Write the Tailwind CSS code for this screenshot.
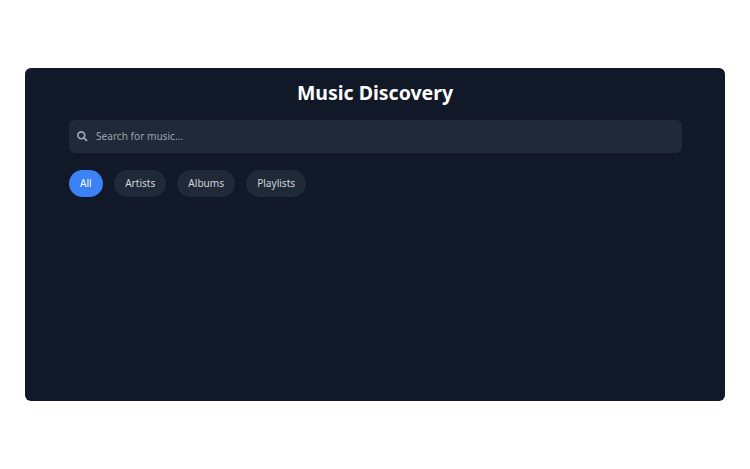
<!DOCTYPE html>
<html>
<head>
<meta charset="utf-8">
<script src="https://cdn.jsdelivr.net/npm/@tailwindcss/browser@4"></script>
</head>
<body class="bg-white font-['Noto_Sans',sans-serif]">
<div class="w-[750px] h-[469px] flex items-center justify-center">
  <main class="w-[700px] h-[333px] rounded-[6px] bg-[#111827] px-[43.5px] pt-[10px] flex flex-col">
    <h1 class="text-center text-[19.5px] leading-[30px] font-bold text-white">Music Discovery</h1>
    <div class="mt-[12px] h-[33px] rounded-md bg-[#1f2937] flex items-center pl-[8.5px] gap-[8.5px]">
      <svg class="w-[10.5px] h-[10.5px] text-[#9ca3af]" viewBox="0 0 512 512" fill="currentColor"><path d="M505 442.7L405.3 343c-4.5-4.5-10.6-7-17-7H372c27.6-35.3 44-79.7 44-128C416 93.1 322.9 0 208 0S0 93.1 0 208s93.1 208 208 208c48.3 0 92.7-16.4 128-44v16.3c0 6.4 2.5 12.5 7 17l99.7 99.7c9.4 9.4 24.6 9.4 33.9 0l28.3-28.3c9.4-9.4 9.4-24.6.1-34zM208 336c-70.7 0-128-57.2-128-128 0-70.7 57.2-128 128-128 70.7 0 128 57.2 128 128 0 70.7-57.2 128-128 128z"/></svg>
      <span class="text-[10.1px] text-[#9ca3af]">Search for music...</span>
    </div>
    <div class="mt-[17px] flex gap-[11px] text-[10.1px] leading-[27px]">
      <span class="h-[27px] px-[11.5px] rounded-full bg-[#3b82f6] text-white">All</span>
      <span class="h-[27px] px-[11px] rounded-full bg-[#1f2937] text-[#d1d5db]">Artists</span>
      <span class="h-[27px] px-[11px] rounded-full bg-[#1f2937] text-[#d1d5db]">Albums</span>
      <span class="h-[27px] px-[11px] rounded-full bg-[#1f2937] text-[#d1d5db]">Playlists</span>
    </div>
  </main>
</div>
</body>
</html>
